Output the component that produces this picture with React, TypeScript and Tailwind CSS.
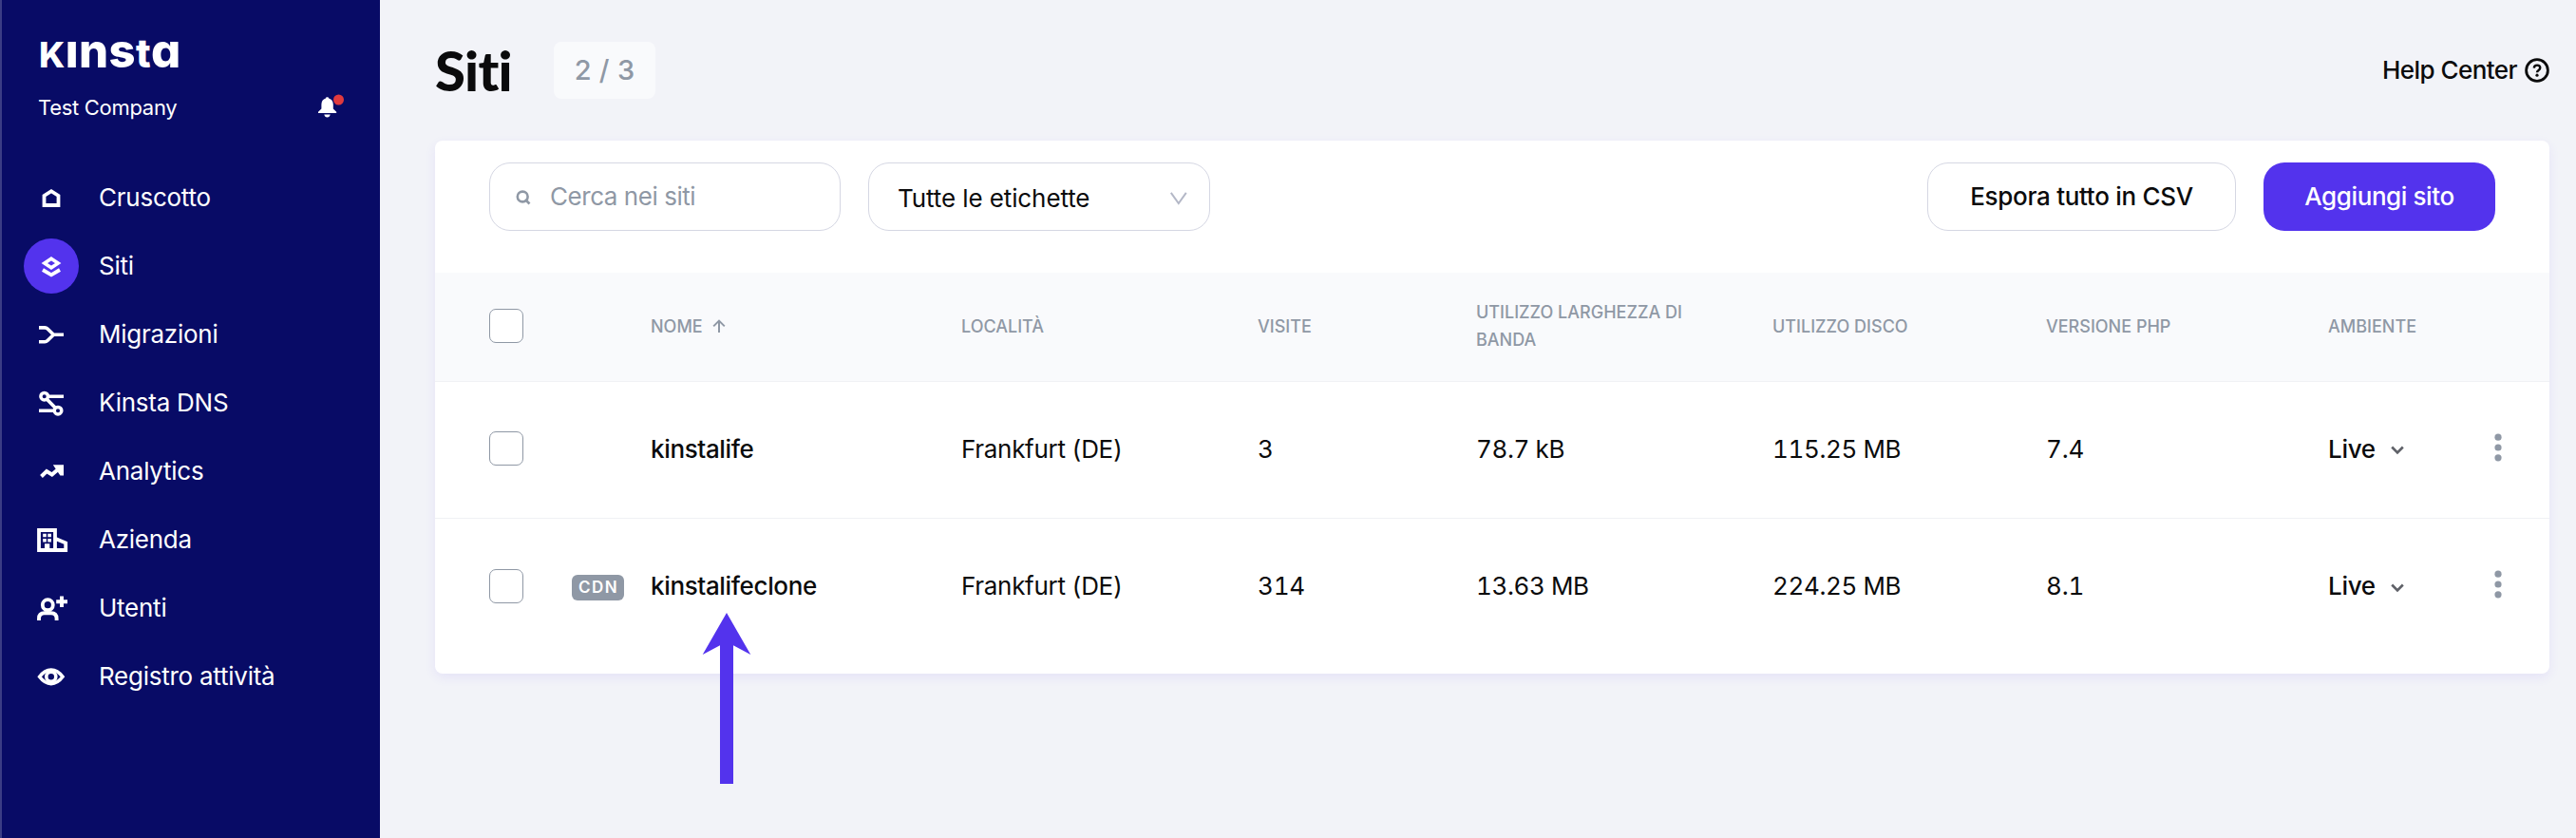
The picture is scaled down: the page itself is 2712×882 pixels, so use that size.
import type { ReactNode } from 'react'

interface NavItem {
  label: string
  icon: ReactNode
  active?: boolean
}

interface Site {
  name: string
  cdn?: boolean
  location: string
  visits: string
  bandwidth: string
  disk: string
  php: string
}

// ── Sidebar icons (32×32 grid) ─────────────────────────────────
const NAV: NavItem[] = [
  {
    label: 'Cruscotto',
    icon: <path d="M8.5 24V14L16 9.2 23.5 14v10z" strokeWidth="3.8" />,
  },
  {
    label: 'Siti',
    active: true,
    icon: (
      <>
        <path d="M16 8.2 23.2 13 16 17.8 8.8 13z" strokeWidth="3.6" />
        <path d="M7 20l9 5.4 9-5.4" strokeWidth="3.8" />
      </>
    ),
  },
  {
    label: 'Migrazioni',
    icon: <path d="M3 8.9h6.2q1.6 0 2.8 1.2l6.4 6.2-6.4 6.2q-1.2 1.2-2.8 1.2H3M18 16.3h11" strokeWidth="3.6" />,
  },
  {
    label: 'Kinsta DNS',
    icon: (
      <>
        <circle cx="8.7" cy="9.2" r="3.8" strokeWidth="3.5" />
        <circle cx="23" cy="24.2" r="3.8" strokeWidth="3.5" />
        <path d="M12.5 9.2H29M3 24.2h16M11.2 12l9.3 9.6" strokeWidth="3.6" />
      </>
    ),
  },
  {
    label: 'Analytics',
    icon: (
      <>
        <path d="M5.5 21.5l5.6-5.4 5.6 3.4 8.8-7.6" strokeWidth="4" />
        <path d="M17.8 9.3H29v11.2h-3.6z" fill="currentColor" stroke="none" />
      </>
    ),
  },
  {
    label: 'Azienda',
    icon: (
      <>
        <path d="M3 6h17v21H3zM20 14.8l11.2 4.8V27H20" strokeWidth="3.8" />
        <path
          d="M7.2 9.7h3.6v3.5H7.2zM12.3 9.7h3.6v3.5h-3.6zM7.2 14.9h3.6v3.5H7.2zM12.3 14.9h3.6v3.5h-3.6zM9 20.3h5.3V27H9z"
          fill="currentColor"
          stroke="none"
        />
      </>
    ),
  },
  {
    label: 'Utenti',
    icon: (
      <>
        <circle cx="12.3" cy="12.7" r="5.5" strokeWidth="3.8" />
        <path d="M3 29v-2q0-5.8 5.8-5.8h7q5.8 0 5.8 5.8v2M27 3.6v11.4M21.2 9.3H33" strokeWidth="3.9" />
      </>
    ),
  },
  {
    label: 'Registro attività',
    icon: (
      <>
        <path d="M3.6 16.3Q9 9 15.8 9T28 16.3Q22.6 23.6 15.8 23.6T3.6 16.3z" strokeWidth="3.6" />
        <circle cx="15.8" cy="16.3" r="5" strokeWidth="3.6" />
      </>
    ),
  },
]

const SITES: Site[] = [
  {
    name: 'kinstalife',
    location: 'Frankfurt (DE)',
    visits: '3',
    bandwidth: '78.7 kB',
    disk: '115.25 MB',
    php: '7.4',
  },
  {
    name: 'kinstalifeclone',
    cdn: true,
    location: 'Frankfurt (DE)',
    visits: '314',
    bandwidth: '13.63 MB',
    disk: '224.25 MB',
    php: '8.1',
  },
]

const GRID = 'grid grid-cols-[87px_83px_327px_312px_230px_312px_288px_297px_100px_1fr] items-center pl-[57px]'

function Sidebar() {
  return (
    <aside className="flex w-[400px] shrink-0 flex-col border-l-2 border-[#3b3d85] bg-[#080b66] text-white">
      {/* Wordmark: every letter sits at the same height */}
      <div className="mt-[45px] ml-[39px] h-[25px] text-[49px] leading-[18px] font-extrabold tracking-[0.4px] whitespace-nowrap [font-feature-settings:'cv11']">
        <span className="text-[37px]">K</span>ıns<span className="text-[41px]">t</span>a
      </div>
      <div className="mt-[27px] flex h-8 items-center justify-between pr-[38px] pl-[38px]">
        <span className="text-[22px] tracking-[-0.3px]">Test Company</span>
        <svg width="28" height="28" viewBox="0 0 28 28" className="-translate-y-px">
          <path
            d="M10.5 4.2c.9 0 1.5.5 1.7 1.3 3 .8 4.6 3.2 4.6 6.4v4.6l3.4 3.3v1.3H1v-1.3l3.4-3.3v-4.6c0-3.2 1.5-5.6 4.5-6.4.2-.8.7-1.3 1.6-1.3zM7.3 22.5h6.4q-.6 3-3.2 3t-3.2-3z"
            fill="currentColor"
          />
          <circle cx="22.5" cy="7" r="5.5" fill="#e03a3e" />
        </svg>
      </div>

      <nav className="mt-[43px] flex flex-col">
        {NAV.map(item => (
          <a key={item.label} className="flex h-[72px] items-center pl-[23px] text-[26px] tracking-[-0.25px]">
            <span
              className={`mr-[21px] flex size-[58px] items-center justify-center rounded-full ${item.active ? 'bg-[#5333ed]' : ''}`}
            >
              <svg width="32" height="32" viewBox="0 0 32 32" fill="none" stroke="currentColor" className="overflow-visible">
                {item.icon}
              </svg>
            </span>
            <span className="pb-[2px]">{item.label}</span>
          </a>
        ))}
      </nav>
    </aside>
  )
}

function Header() {
  return (
    <header className="flex h-[148px] items-center justify-between">
      <div className="flex items-center">
        <h1 className="w-[125px] pb-px font-['Lato','Liberation_Sans',sans-serif] text-[58px] leading-[60px] font-black tracking-[-0.8px] [font-variant-ligatures:none]">
          Siti
        </h1>
        <span className="flex h-[60px] w-[107px] items-center justify-center rounded-lg bg-[#f9fafc] text-[29px] font-medium tracking-[0.3px] text-[#8f98a5]">
          2 / 3
        </span>
      </div>
      <a className="flex items-center gap-2 text-[26px] font-medium tracking-[-0.55px]">
        <span className="pb-px">Help Center</span>
        <svg width="26" height="26" viewBox="0 0 26 26" fill="none" stroke="currentColor">
          <circle cx="13" cy="13" r="11.4" strokeWidth="2.8" />
          <path d="M9.8 10.6q.2-3 3.3-3t3.2 2.7q0 1.5-1.7 2.6-1.6 1-1.6 2.3" strokeWidth="2.4" />
          <circle cx="13" cy="18.2" r="1.6" fill="currentColor" stroke="none" />
        </svg>
      </a>
    </header>
  )
}

function Toolbar() {
  return (
    <div className="flex h-[139px] items-start px-[57px] pt-[23px] text-[26px]">
      <div className="flex h-[72px] w-[370px] items-center rounded-[22px] border border-[#d5d7e3] pl-[27px] text-[#8f98a5]">
        <svg width="16" height="16" viewBox="0 0 16 16" fill="none" stroke="currentColor" className="mt-px mr-5">
          <circle cx="7.2" cy="7" r="5.4" strokeWidth="2.6" />
          <path d="M10 10l4.5 4.5" strokeWidth="2.6" />
        </svg>
        <span className="pb-[2px] tracking-[-0.45px]">Cerca nei siti</span>
      </div>
      <div className="ml-[29px] flex h-[72px] w-[360px] items-center justify-between rounded-[22px] border border-[#d5d7e3] pr-[22px] pl-[30px]">
        <span className="pt-[2px] tracking-[-0.1px]">Tutte le etichette</span>
        <svg width="20" height="16" viewBox="0 0 20 16" fill="none" stroke="#b4b8c7" className="mt-[3px]">
          <path d="M1.8 1.8l8 11.2 8-11.2" strokeWidth="2" />
        </svg>
      </div>
      <button className="ml-auto h-[72px] w-[325px] rounded-[22px] border border-[#d5d7e3] pb-px font-medium tracking-[-0.3px]">
        Espora tutto in CSV
      </button>
      <button className="ml-[29px] h-[72px] w-[244px] rounded-[22px] bg-[#5333ed] pb-[2px] font-medium tracking-[-0.4px] text-white">
        Aggiungi sito
      </button>
    </div>
  )
}

function Checkbox() {
  return <span className="size-9 rounded-[7px] border border-[#8f98a5] bg-white" />
}

function SiteRow({ site }: { site: Site }) {
  return (
    <div className={`${GRID} h-36 border-b border-[#f0f1f5] pb-[3px] text-[26px] tabular-nums last-of-type:border-b-0`}>
      <Checkbox />
      <span>
        {site.cdn && (
          <span className="mt-[4px] flex h-[27px] w-[55px] items-center justify-center rounded-[6px] bg-[#8f98a5] pl-px text-[17px] font-semibold tracking-[1.5px] text-white">
            CDN
          </span>
        )}
      </span>
      <span className="font-medium tracking-[-0.35px]">{site.name}</span>
      <span className="tracking-[-0.3px]">{site.location}</span>
      <span className="tracking-[-0.2px]">{site.visits}</span>
      <span className="tracking-[-0.4px]">{site.bandwidth}</span>
      <span className="tracking-[-0.4px]">{site.disk}</span>
      <span className="tracking-[-0.2px]">{site.php}</span>
      <span className="flex items-center gap-4 font-medium tracking-[-0.3px]">
        Live
        <svg width="14" height="10" viewBox="0 0 14 10" fill="none" stroke="#5f6168" className="mt-1">
          <path d="M1.2 1.5L7 7.5l5.8-6" strokeWidth="2.6" />
        </svg>
      </span>
      <svg width="8" height="30" viewBox="0 0 8 30" fill="#8f98a5" className="mr-[50px] mb-[3px] justify-self-end">
        <circle cx="4" cy="4.2" r="3.6" />
        <circle cx="4" cy="15" r="3.6" />
        <circle cx="4" cy="25.8" r="3.6" />
      </svg>
    </div>
  )
}

export default function App() {
  return (
    <div className="flex h-[882px] w-[2712px] overflow-hidden bg-[#f2f3f8] font-['Inter','Liberation_Sans',sans-serif] text-[#0b0b0c]">
      <Sidebar />

      <main className="min-w-0 flex-1 pr-7 pl-[58px]">
        <Header />

        <section className="relative h-[561px] rounded-lg bg-white shadow-[0_4px_12px_rgba(83,51,237,0.08)]">
          <Toolbar />

          <div className={`${GRID} h-[115px] border-b border-[#f0f1f5] bg-[#f9fafc] pb-[2px] text-[18px] leading-[29px] font-medium text-[#8f98a5]`}>
            <Checkbox />
            <span />
            <span className="flex items-center gap-[10px]">
              NOME
              <svg width="14" height="14" viewBox="0 0 14 14" fill="none" stroke="currentColor">
                <path d="M7 14V2M1.2 7.4L7 1.6l5.8 5.8" strokeWidth="2" />
              </svg>
            </span>
            <span>LOCALITÀ</span>
            <span>VISITE</span>
            <span className="pr-12">UTILIZZO LARGHEZZA DI BANDA</span>
            <span>UTILIZZO DISCO</span>
            <span>VERSIONE PHP</span>
            <span>AMBIENTE</span>
          </div>

          {SITES.map(site => (
            <SiteRow key={site.name} site={site} />
          ))}

          {/* Pointer under the cloned site */}
          <svg width="52" height="180" viewBox="0 0 52 180" className="absolute top-[497px] left-[281px]">
            <path d="M26 0l25.3 44L33 34.2V180H19V34.2L.7 44z" fill="#5333ed" />
          </svg>
        </section>
      </main>
    </div>
  )
}
